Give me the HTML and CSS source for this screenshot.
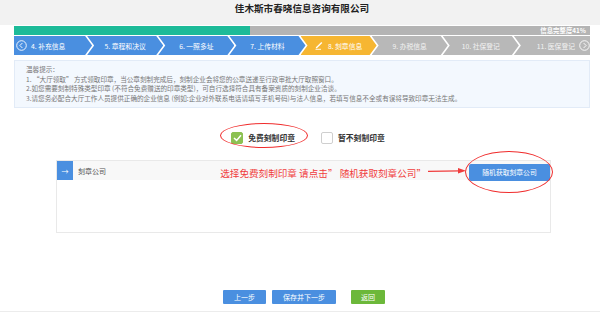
FILE: index.html
```html
<!DOCTYPE html>
<html lang="zh-CN">

<head>
    <meta charset="UTF-8">
    <meta name="viewport" content="width=device-width, initial-scale=1.0">
    <title>刻章信息</title>
    <link rel="stylesheet" href="styles.css">
</head>

<body>
    <div class="top">
        <h1>佳木斯市春晓信息咨询有限公司</h1>
    </div>

    <div class="wrap">
        <div class="progress">
            <div class="progress-fill"></div>
            <span class="progress-text">信息完整度41%</span>
        </div>

        <div class="steps">
            <div class="step step-first done">
                <svg class="circle-icon" width="11" height="11" viewBox="0 0 11 11"><circle cx="5.5" cy="5.5" r="4.8" fill="none" stroke="#fff" stroke-width="0.9"/><polyline points="6.4,3 3.9,5.5 6.4,8" fill="none" stroke="#fff" stroke-width="0.9"/></svg>
                <span>4. 补充信息</span>
            </div>
            <div class="step done"><span>5. 章程和决议</span></div>
            <div class="step done"><span>6. 一照多址</span></div>
            <div class="step done"><span>7. 上传材料</span></div>
            <div class="step current">
                <svg class="pen-icon" width="9" height="9" viewBox="0 0 9 9"><line x1="1.2" y1="7" x2="6.8" y2="1.4" stroke="#fff" stroke-width="1.4"/><line x1="0.5" y1="8.3" x2="6" y2="8.3" stroke="#fff" stroke-width="0.9"/></svg>
                <span>8. 刻章信息</span>
            </div>
            <div class="step todo"><span>9. 办税信息</span></div>
            <div class="step todo"><span>10. 社保登记</span></div>
            <div class="step step-last todo">
                <span>11. 医保登记</span>
                <svg class="circle-icon" width="11" height="11" viewBox="0 0 11 11"><circle cx="5.5" cy="5.5" r="4.8" fill="none" stroke="#fff" stroke-width="0.9"/><polyline points="4.6,3 7.1,5.5 4.6,8" fill="none" stroke="#fff" stroke-width="0.9"/></svg>
            </div>
        </div>

        <div class="notice">
            <p>温馨提示：</p>
            <p>1. “大厅领取” 方式领取印章，当公章刻制完成后，刻制企业会将您的公章送递至行政审批大厅取照窗口。</p>
            <p>2.如您需要刻制特殊类型印章 (不符合免费赠送的印章类型)，可自行选择符合具有备案资质的刻制企业洽谈。</p>
            <p>3.请您务必配合大厅工作人员提供正确的企业信息 (例如:企业对外联系电话请填写手机号码)与法人信息，若填写信息不全或有误将导致印章无法生成。</p>
        </div>

        <div class="choices">
            <label class="choice choice-marked">
                <span class="box box-checked">
                    <svg width="9" height="8" viewBox="0 0 9 8"><polyline points="1,4 3.6,6.4 8,1.3" fill="none" stroke="#fff" stroke-width="1.5"/></svg>
                </span>
                <span>免费刻制印章</span>
                <span class="ring ring-choice"></span>
            </label>
            <label class="choice">
                <span class="box"></span>
                <span>暂不刻制印章</span>
            </label>
        </div>

        <div class="panel">
            <div class="panel-head">
                <span class="panel-mark">→</span>
                <span class="panel-title">刻章公司</span>
                <span class="hint">选择免费刻制印章 请点击” 随机获取刻章公司”</span>
                <svg class="hint-arrow" width="38" height="8" viewBox="0 0 38 8"><line x1="0" y1="4.3" x2="32" y2="3.8" stroke="#f03c3c" stroke-width="1.2"/><polygon points="30,1 38,3.8 30,6.6" fill="#f03c3c"/></svg>
                <button class="btn-random">随机获取刻章公司<span class="ring ring-btn"></span></button>
            </div>
        </div>
    </div>

    <div class="actions">
        <button class="btn btn-blue">上一步</button>
        <button class="btn btn-blue">保存并下一步</button>
        <button class="btn btn-green">返回</button>
    </div>
</body>

</html>
```

FILE: styles.css
```css
* {
    box-sizing: border-box;
    font-family: "Noto Sans CJK SC", "Noto Sans", sans-serif;
}

body {
    margin: 0;
    background-color: #ffffff;
}

.top {
    height: 25px;
    background-color: #f2f2f2;
    padding-top: 2px;
}

.top h1 {
    margin: 0 0 0 4px;
    text-align: center;
    font-size: 9.6px;
    line-height: 13px;
    font-weight: bold;
    color: #222;
}

.wrap {
    margin: 1px 10px 0 14px;
}

.progress {
    position: relative;
    height: 9px;
    background-color: #b4b4b4;
    display: flex;
    justify-content: flex-end;
    align-items: center;
}

.progress-fill {
    position: absolute;
    left: 0;
    top: 0;
    height: 100%;
    width: 41%;
    background-color: #1dbb99;
}

.progress-text {
    font-size: 6.4px;
    color: #fff;
    font-weight: bold;
    padding-right: 4px;
}

.steps {
    display: flex;
    height: 19px;
    margin-top: 1px;
}

.step {
    flex: 1;
    display: flex;
    align-items: center;
    justify-content: center;
    gap: 4px;
    margin-left: -5px;
    color: #fff;
    font-size: 6.8px;
    clip-path: polygon(0 0, calc(100% - 7px) 0, 100% 50%, calc(100% - 7px) 100%, 0 100%, 7px 50%);
}

.step-first {
    margin-left: 0;
    justify-content: flex-start;
    padding-left: 2px;
    clip-path: polygon(0 0, calc(100% - 7px) 0, 100% 50%, calc(100% - 7px) 100%, 0 100%);
}

.step-last {
    justify-content: flex-end;
    clip-path: polygon(0 0, 100% 0, 100% 100%, 0 100%, 7px 50%);
}

.done {
    background-color: #4a8fe0;
}

.current {
    background-color: #f6b632;
}

.todo {
    background-color: #b8b8b8;
    color: #f3f3f3;
}

.notice {
    margin-top: 5px;
    height: 48px;
    background-color: #f3f8fe;
    border: 1px solid #e2ebf7;
    padding: 4px 0 0 11px;
}

.notice p {
    margin: 0;
    font-size: 6.6px;
    line-height: 9.6px;
    color: #777;
    white-space: nowrap;
}

.choices {
    display: flex;
    justify-content: center;
    gap: 26px;
    margin: 18px 0 0 12px;
    height: 23px;
    align-items: center;
}

.choice {
    position: relative;
    display: flex;
    align-items: center;
    gap: 5px;
    font-size: 7.8px;
    color: #333;
    font-weight: bold;
}

.box {
    width: 12px;
    height: 12px;
    border: 1px solid #cfcfcf;
    border-radius: 2px;
    display: flex;
    align-items: center;
    justify-content: center;
    background-color: #fff;
}

.box-checked {
    border-color: #8cc152;
    background-color: #8cc152;
}

.ring {
    position: absolute;
    border: 1.3px solid #f02c2c;
    border-radius: 50%;
}

.ring-choice {
    left: -11px;
    top: -9px;
    width: 88px;
    height: 25px;
}

.panel {
    margin: 11px 0 0 42px;
    width: 495px;
    height: 73px;
    border: 1px solid #e9e9e9;
}

.panel-head {
    height: 19px;
    background-color: #f8f8f8;
    display: flex;
    align-items: center;
}

.panel-mark {
    width: 16px;
    height: 19px;
    background-color: #4a8fe0;
    color: #fff;
    font-size: 7px;
    display: flex;
    align-items: center;
    justify-content: center;
}

.panel-title {
    margin-left: 5px;
    font-size: 7px;
    color: #555;
    flex: 1;
}

.hint {
    font-size: 9.6px;
    color: #f03c3c;
    margin-top: 4px;
}

.hint-arrow {
    margin: 1px 3px 0 2px;
}

.btn-random {
    position: relative;
    height: 17px;
    width: 81px;
    margin: 3px 0 0 0;
    border: none;
    border-radius: 2px;
    background-color: #4a8fe0;
    color: #fff;
    font-size: 6.8px;
    padding: 0;
}

.ring-btn {
    left: -4px;
    top: -13px;
    width: 88px;
    height: 42px;
}

.actions {
    display: flex;
    justify-content: center;
    gap: 6px;
    margin-top: 57px;
    padding: 0 0 7px 8px;
    border-bottom: 1px solid #ececec;
}

.btn {
    height: 14px;
    border: none;
    border-radius: 1px;
    color: #fff;
    font-size: 7px;
    padding: 0 11px;
}

.btn-blue {
    background-color: #4a8fe0;
}

.btn-green {
    background-color: #6cb83a;
    padding: 0 10px;
    margin-left: 9px;
}
```
